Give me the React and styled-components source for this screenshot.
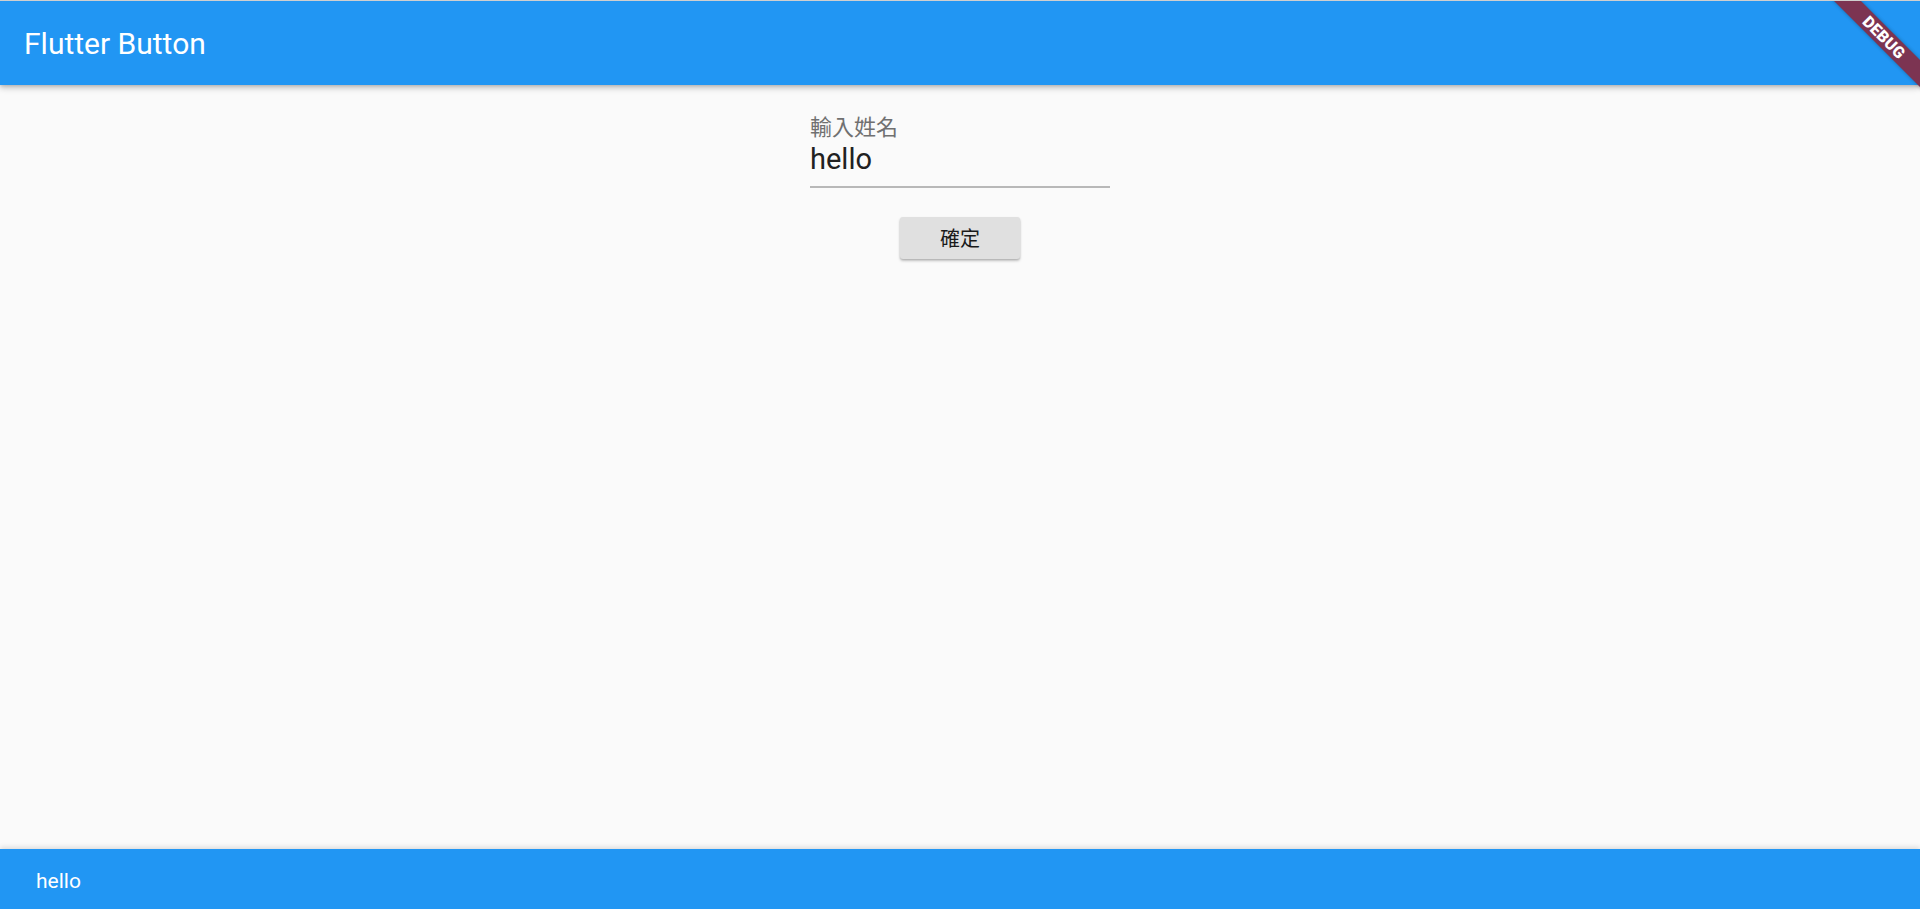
import React, { useState } from 'react';
import styled, { createGlobalStyle } from 'styled-components';

const GlobalStyle = createGlobalStyle`
    html, body {
        margin: 0;
        padding: 0;
        height: 100%;
        background: #fafafa;
    }
    #root {
        height: 100%;
    }
`;

const Page = styled.div`
    position: relative;
    height: 909px;
    display: flex;
    flex-direction: column;
    overflow: hidden;
    border-top: 1px solid #cfcfcf;
    box-sizing: border-box;
    font-family: Roboto, 'Noto Sans CJK TC', sans-serif;
`;

const AppBar = styled.header`
    height: 84px;
    flex: none;
    display: flex;
    align-items: center;
    padding-left: 24px;
    background: #2196f3;
    box-shadow: 0 3px 6px rgba(0, 0, 0, 0.22), 0 1px 3px rgba(0, 0, 0, 0.12);
    position: relative;
    z-index: 2;
`;

const Title = styled.h1`
    margin: 0;
    font-size: 30px;
    font-weight: 400;
    color: #fff;
`;

const Body = styled.main`
    flex: 1;
    display: flex;
    flex-direction: column;
    align-items: center;
    padding-top: 30px;
`;

const Field = styled.label`
    width: 300px;
    display: flex;
    flex-direction: column;
    border-bottom: 2px solid #b8b8b8;
    padding-bottom: 8.5px;
`;

const FieldLabel = styled.span`
    font-size: 22px;
    line-height: 26px;
    color: #707070;
`;

const FieldInput = styled.input`
    border: none;
    outline: none;
    background: transparent;
    padding: 0;
    margin: 0;
    font-family: Roboto, sans-serif;
    font-size: 29px;
    line-height: 36px;
    height: 36px;
    color: #212121;
`;

const RaisedButton = styled.button`
    margin-top: 29px;
    width: 120px;
    height: 42px;
    border: none;
    border-radius: 3px;
    background: #e0e0e0;
    font-family: 'Noto Sans CJK TC', sans-serif;
    font-size: 20px;
    color: #1a1a1a;
    box-shadow: 0 2px 3px rgba(0, 0, 0, 0.2), 0 1px 2px rgba(0, 0, 0, 0.14);
    cursor: pointer;
`;

const BottomBar = styled.footer`
    height: 60px;
    box-sizing: border-box;
    padding: 4px 0 0 36px;
    flex: none;
    display: flex;
    align-items: center;
    background: #2196f3;
    box-shadow: 0 -2px 5px rgba(0, 0, 0, 0.12);
    color: #fff;
    font-size: 21px;
`;

const Banner = styled.div`
    position: absolute;
    top: 36px;
    right: 36px;
    width: 200px;
    height: 19px;
    margin: -9px -100px 0 0;
    transform: rotate(45deg);
    background: #7c3452;
    box-shadow: 0 0 4px rgba(0, 0, 0, 0.3);
    display: flex;
    align-items: center;
    justify-content: center;
    color: #fff;
    font-family: Roboto, sans-serif;
    font-weight: 900;
    font-size: 16px;
    letter-spacing: 0.3px;
    z-index: 5;
`;

export default function App() {
    const [name, setName] = useState('hello');
    const [shown, setShown] = useState('hello');

    return (
        <Page>
            <GlobalStyle />
            <AppBar>
                <Title>Flutter Button</Title>
            </AppBar>
            <Body>
                <Field>
                    <FieldLabel>輸入姓名</FieldLabel>
                    <FieldInput value={name} onChange={(e) => setName(e.target.value)} />
                </Field>
                <RaisedButton onClick={() => setShown(name)}>確定</RaisedButton>
            </Body>
            <BottomBar>{shown}</BottomBar>
            <Banner>DEBUG</Banner>
        </Page>
    );
}
